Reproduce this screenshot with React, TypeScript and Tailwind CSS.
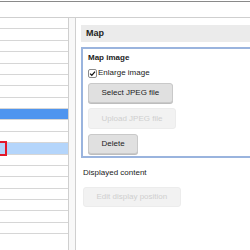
import React from 'react';

const rows = Array.from({ length: 19 }, (_, i) => i);

const Button: React.FC<{ label: string; disabled?: boolean; className?: string }> = ({ label, disabled, className }) => (
  <div
    className={
      'h-[20px] px-[12.5px] flex items-center rounded-[3px] border text-[8px] leading-none whitespace-nowrap w-fit ' +
      (disabled
        ? 'bg-[#f2f2f2] border-[#ececec] text-[#cfcfcf]'
        : 'bg-[#e0e0e0] border-[#c9c9c9] text-[#222] shadow-[0_1px_0_#bdbdbd]') +
      ' ' +
      (className || '')
    }
  >
    {label}
  </div>
);

const App: React.FC = () => {
  return (
    <div className="w-[250px] h-[250px] overflow-hidden bg-white flex flex-col font-['Liberation_Sans',Arial,sans-serif] text-[#222]">
      {/* top toolbar edge */}
      <div className="mt-[1px] h-[1px] bg-[#8a8a8a] shrink-0" />
      <div className="h-[15px] shrink-0" />
      <div className="h-[1px] bg-[#cfcfcf] shrink-0" />

      <div className="flex flex-1 min-h-0 overflow-hidden">
        {/* left list */}
        <div className="w-[69px] shrink-0 border-r border-[#cfcfcf] flex flex-col">
          {rows.map((i) => (
            <div
              key={i}
              className={
                'h-[11.375px] shrink-0 border-b border-[#d6d6d6] relative ' +
                (i === 8 ? 'bg-[#4f95ef]' : i === 11 ? 'bg-[#b4d5fb]' : '')
              }
            >
              {i === 11 && (
                <div className="absolute left-[-12px] w-[19px] top-[-2px] bottom-[-2px] border-2 border-[#e3192b]" />
              )}
            </div>
          ))}
        </div>

        {/* splitter */}
        <div className="w-[7px] shrink-0 bg-[#f8f8f8] border-r border-[#cfcfcf]" />

        {/* right panel */}
        <div className="flex-1 min-w-0 overflow-hidden pl-[5px] flex flex-col items-start">
          <div className="mt-[7px] w-[220px] shrink-0 h-[17px] bg-[#ebebeb] flex items-center pl-[5px] text-[9px] font-bold">
            Map
          </div>

          <div className="mt-[5px] w-[220px] shrink-0 border-2 border-r-0 border-[#9ab4de] pl-[5px] pt-[4px] pb-[2px] flex flex-col">
            <div className="h-[10px] flex items-center text-[8px] font-bold">Map image</div>
            <div className="mt-[5px] h-[10px] flex items-center gap-[1px] text-[8px]">
              <span className="w-[9px] h-[9px] border border-[#8a8a8a] rounded-[2px] bg-white flex items-center justify-center">
                <svg width="7" height="7" viewBox="0 0 10 10">
                  <path d="M1.5 5.2 L4 7.6 L8.6 2.2" fill="none" stroke="#111" strokeWidth="1.8" />
                </svg>
              </span>
              <span>Enlarge image</span>
            </div>
            <Button label="Select JPEG file" className="mt-[5px]" />
            <Button label="Upload JPEG file" disabled className="mt-[5px] h-[21px]" />
            <Button label="Delete" className="mt-[5px]" />
          </div>

          <div className="mt-[10px] ml-[2px] h-[10px] flex items-center text-[8px]">Displayed content</div>
          <Button label="Edit display position" disabled className="mt-[9px] ml-[2px]" />
        </div>
      </div>
    </div>
  );
};

export default App;
